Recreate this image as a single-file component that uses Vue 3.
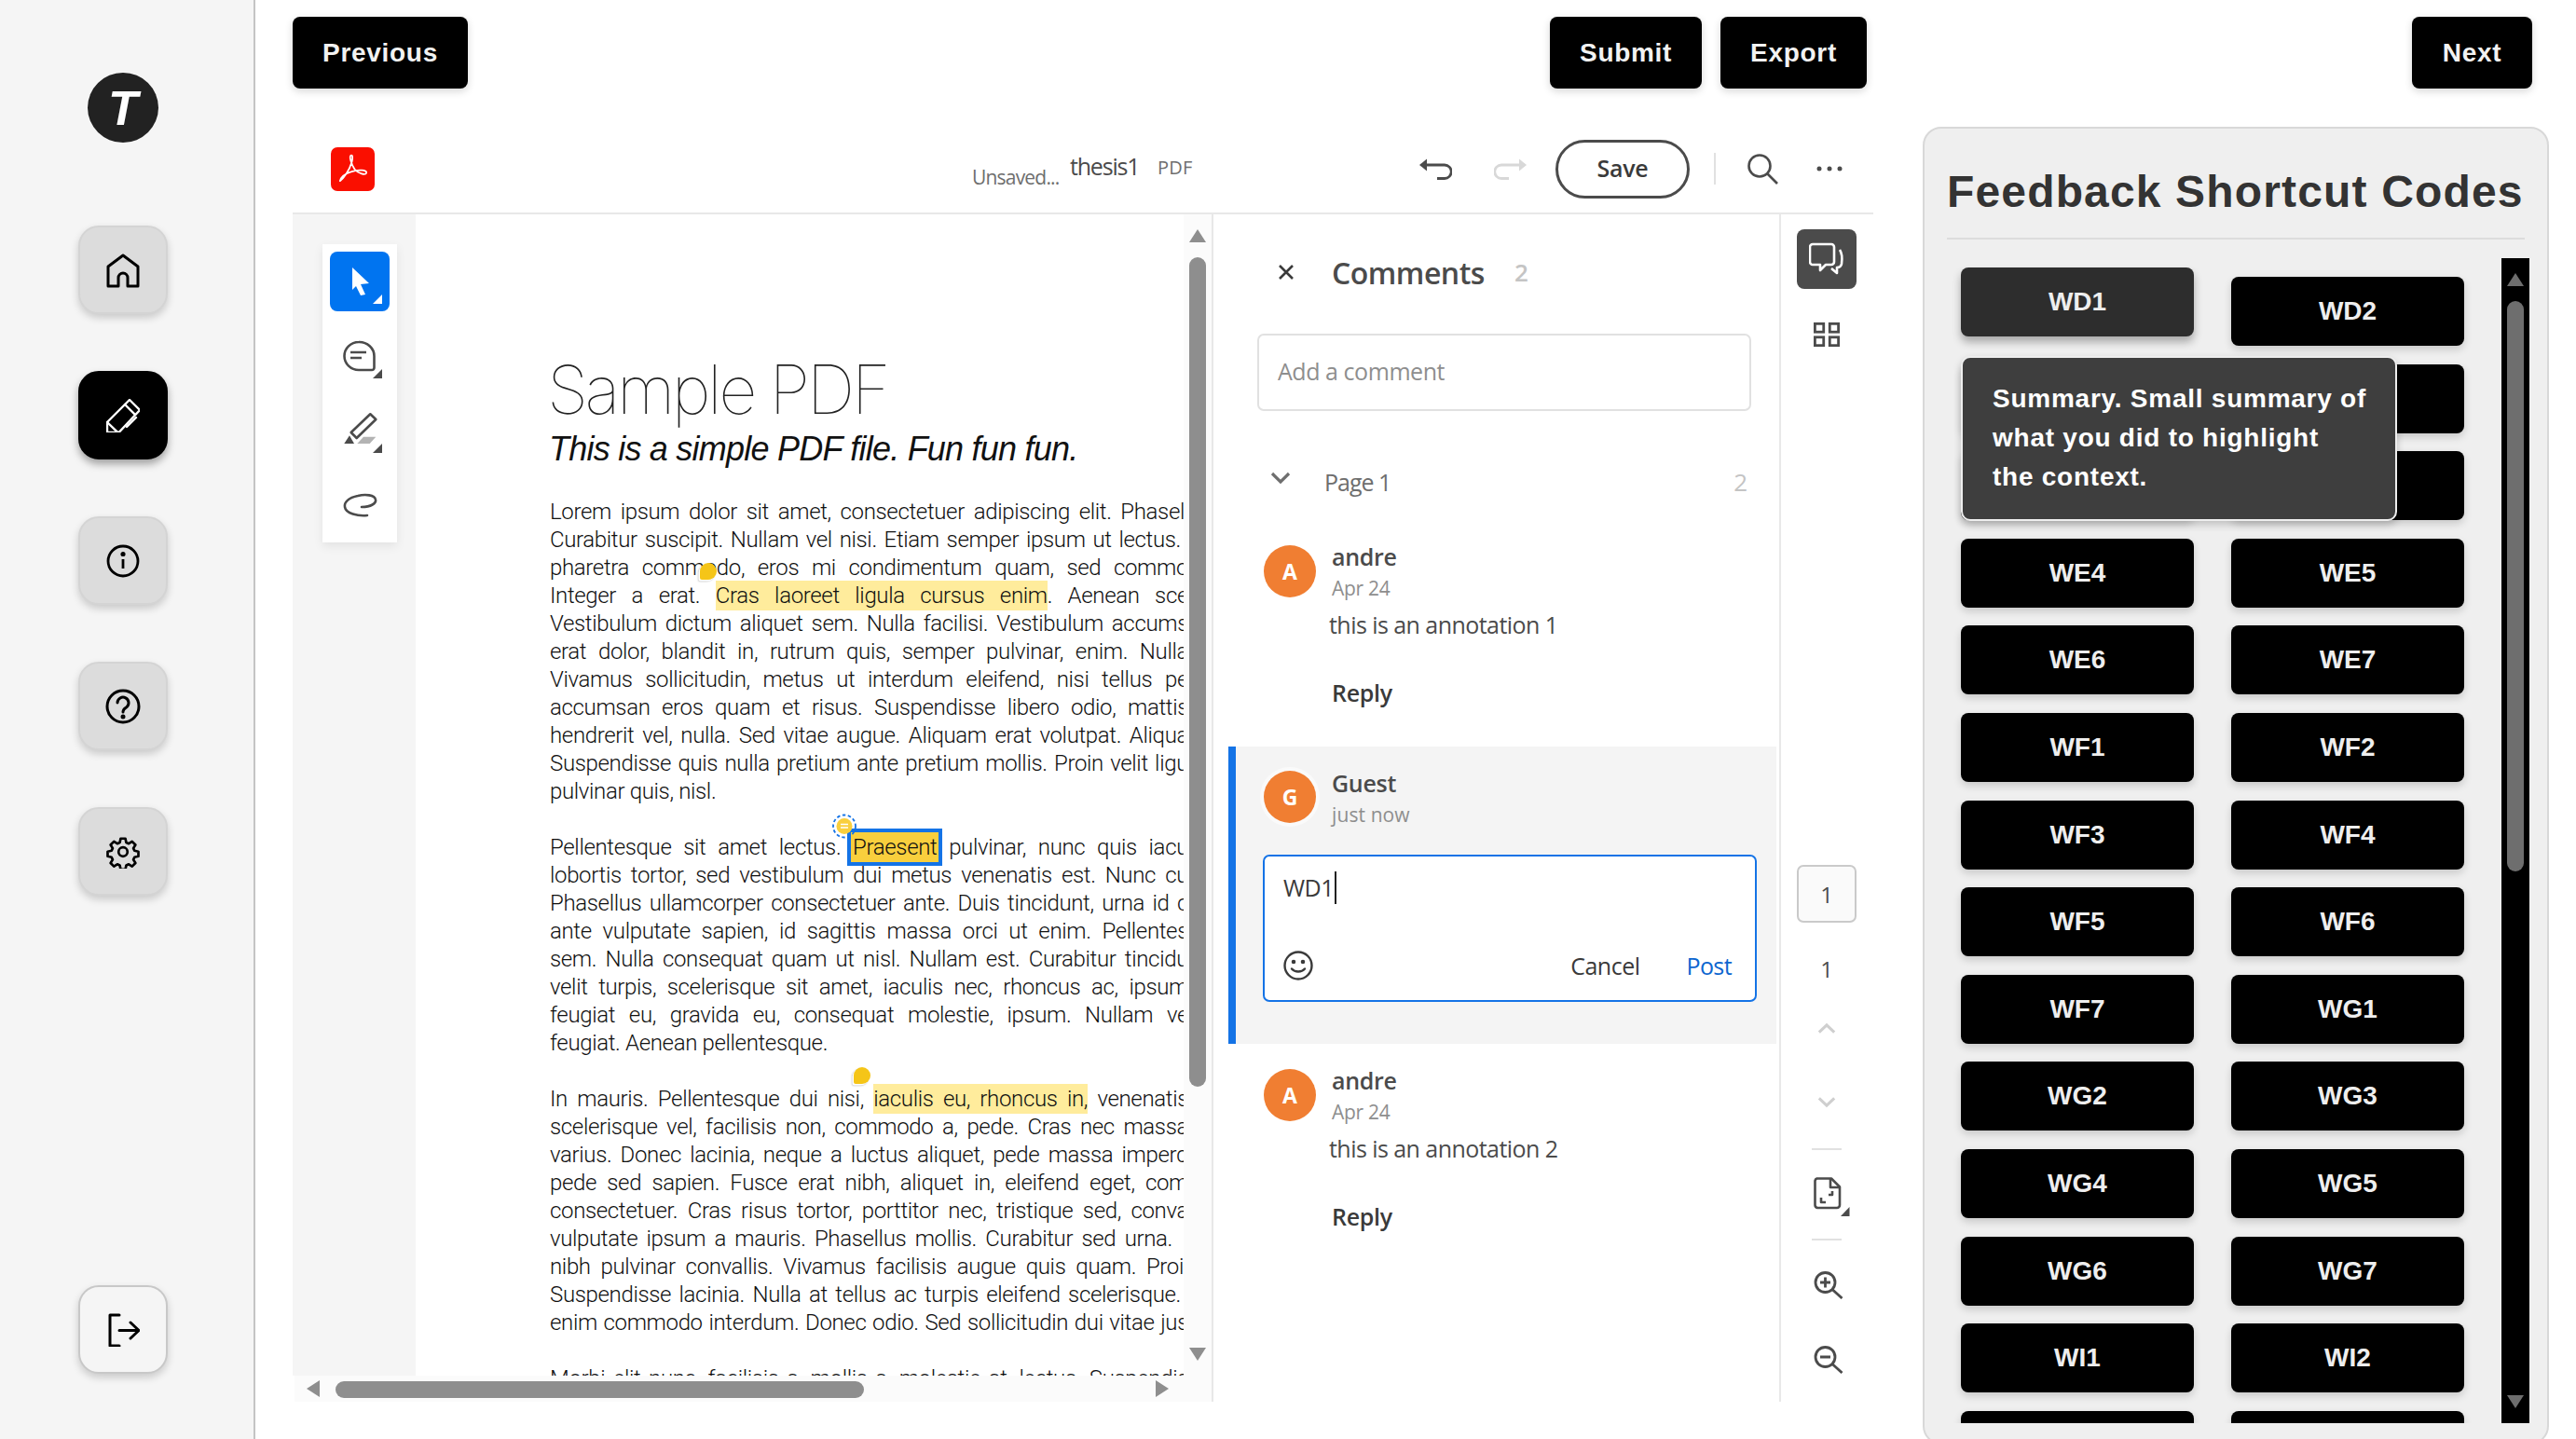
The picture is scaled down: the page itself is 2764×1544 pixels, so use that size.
<script setup>
const paragraphs = [
  [
    { w: 681, parts: [{ t: 'Lorem ipsum dolor sit amet, consectetuer adipiscing elit. Phasel' }] },
    { w: 677, parts: [{ t: 'Curabitur suscipit. Nullam vel nisi. Etiam semper ipsum ut lectus.' }] },
    { parts: [{ t: 'pharetra commodo, eros mi condimentum quam, sed commo' }] },
    { parts: [{ t: 'Integer a erat. ' }, { t: 'Cras laoreet ligula cursus enim', c: 'hl' }, { t: '. Aenean sce' }] },
    { parts: [{ t: 'Vestibulum dictum aliquet sem. Nulla facilisi. Vestibulum accums' }] },
    { parts: [{ t: 'erat dolor, blandit in, rutrum quis, semper pulvinar, enim. Nulla' }] },
    { parts: [{ t: 'Vivamus sollicitudin, metus ut interdum eleifend, nisi tellus pe' }] },
    { parts: [{ t: 'accumsan eros quam et risus. Suspendisse libero odio, mattis' }] },
    { parts: [{ t: 'hendrerit vel, nulla. Sed vitae augue. Aliquam erat volutpat. Aliqua' }] },
    { parts: [{ t: 'Suspendisse quis nulla pretium ante pretium mollis. Proin velit ligu' }] },
    { last: true, parts: [{ t: 'pulvinar quis, nisl.' }] },
  ],
  [
    { parts: [{ t: 'Pellentesque sit amet lectus. ' }, { t: 'Praesent', c: 'sel' }, { t: ' pulvinar, nunc quis iacu' }] },
    { parts: [{ t: 'lobortis tortor, sed vestibulum dui metus venenatis est. Nunc cu' }] },
    { parts: [{ t: 'Phasellus ullamcorper consectetuer ante. Duis tincidunt, urna id c' }] },
    { parts: [{ t: 'ante vulputate sapien, id sagittis massa orci ut enim. Pellentes' }] },
    { parts: [{ t: 'sem. Nulla consequat quam ut nisl. Nullam est. Curabitur tincidu' }] },
    { parts: [{ t: 'velit turpis, scelerisque sit amet, iaculis nec, rhoncus ac, ipsum' }] },
    { parts: [{ t: 'feugiat eu, gravida eu, consequat molestie, ipsum. Nullam ve' }] },
    { last: true, parts: [{ t: 'feugiat. Aenean pellentesque.' }] },
  ],
  [
    { parts: [{ t: 'In mauris. Pellentesque dui nisi, ' }, { t: 'iaculis eu, rhoncus in,', c: 'hl' }, { t: ' venenatis' }] },
    { parts: [{ t: 'scelerisque vel, facilisis non, commodo a, pede. Cras nec massa' }] },
    { parts: [{ t: 'varius. Donec lacinia, neque a luctus aliquet, pede massa imperd' }] },
    { parts: [{ t: 'pede sed sapien. Fusce erat nibh, aliquet in, eleifend eget, com' }] },
    { parts: [{ t: 'consectetuer. Cras risus tortor, porttitor nec, tristique sed, conva' }] },
    { w: 668, parts: [{ t: 'vulputate ipsum a mauris. Phasellus mollis. Curabitur sed urna.' }] },
    { w: 680, parts: [{ t: 'nibh pulvinar convallis. Vivamus facilisis augue quis quam. Proi' }] },
    { w: 677, parts: [{ t: 'Suspendisse lacinia. Nulla at tellus ac turpis eleifend scelerisque.' }] },
    { parts: [{ t: 'enim commodo interdum. Donec odio. Sed sollicitudin dui vitae jus' }] },
  ],
  [
    { parts: [{ t: 'Morbi elit nunc, facilisis a, mollis a, molestie at, lectus. Suspendis' }] },
  ],
]

const codes = [
  'WD1', 'WD2', 'WD3', 'WD4', 'WE2', 'WE3', 'WE4', 'WE5', 'WE6', 'WE7', 'WF1', 'WF2', 'WF3', 'WF4',
  'WF5', 'WF6', 'WF7', 'WG1', 'WG2', 'WG3', 'WG4', 'WG5', 'WG6', 'WG7', 'WI1', 'WI2', 'WI3', 'WI4',
]
</script>

<template>
  <div class="root">
    <aside class="sidebar">
      <div class="logo">T</div>
      <button class="nav">
        <svg width="36" height="38" viewBox="0 0 36 38" fill="none" stroke="#000" stroke-width="3" stroke-linejoin="round">
          <path d="M2 15 18 3l16 12v21H23V27a5 5 0 0 0-10 0v9H2z" />
        </svg>
      </button>
      <button class="nav active">
        <svg width="36" height="36" viewBox="0 0 36 36" fill="none" stroke="#fff" stroke-width="2.4" stroke-linejoin="round" stroke-linecap="round">
          <path d="M1 25 25 1l11 11-22.500 24H1z" />
          <path d="M20 6l10.700 10.700M1 25l11 10.700M22 30l10-10" />
        </svg>
      </button>
      <button class="nav">
        <svg width="36" height="36" viewBox="0 0 36 36" fill="none" stroke="#000" stroke-width="2.800">
          <circle cx="18" cy="18" r="16" />
          <path d="M18 16v10" />
          <circle cx="18" cy="10.500" r="1.200" fill="#000" />
        </svg>
      </button>
      <button class="nav">
        <svg width="38" height="38" viewBox="0 0 38 38" fill="none" stroke="#000" stroke-width="3" stroke-linecap="round">
          <circle cx="19" cy="19" r="17" />
          <path d="M13 15a6 6 0 1 1 9.500 5c-2.500 1.500-3.500 2.500-3.500 5" />
          <circle cx="19" cy="30" r="1" fill="#000" />
        </svg>
      </button>
      <button class="nav">
        <svg width="36" height="36" viewBox="0 0 24 24" fill="none" stroke="#000" stroke-width="1.800" stroke-linejoin="round">
          <circle cx="12" cy="12" r="3.200" />
          <path d="M10.300 2.500h3.400l.6 2.800 1.800.8 2.400-1.500 2.400 2.400-1.500 2.400.8 1.800 2.800.6v3.400l-2.800.6-.8 1.800 1.500 2.400-2.400 2.400-2.400-1.500-1.800.8-.6 2.800h-3.400l-.6-2.800-1.800-.8-2.400 1.500-2.400-2.400 1.500-2.400-.8-1.800-2.800-.6v-3.400l2.800-.6.800-1.800-1.500-2.400 2.400-2.400 2.400 1.500 1.800-.8z" />
        </svg>
      </button>
      <button class="nav logout">
        <svg width="36" height="36" viewBox="0 0 36 36" fill="none" stroke="#000" stroke-width="3" stroke-linecap="round" stroke-linejoin="round">
          <path d="M14 2H4v33h10" />
          <path d="M14 18.500h21M26 10l9 8.500-9 8.500" />
        </svg>
      </button>
    </aside>

    <main class="main">
      <div class="topbar">
        <button class="top-btn prev">Previous</button>
        <div class="actions">
          <button class="top-btn">Submit</button>
          <button class="top-btn">Export</button>
        </div>
        <button class="top-btn next">Next</button>
      </div>

      <div class="content">
        <section class="editor">
          <header class="ed-head">
            <div class="pdf-icon">
              <svg width="47" height="47" viewBox="0 0 48 48" fill="none" stroke="#fff" stroke-width="1.800" stroke-linejoin="round">
                <path d="M10 37c4-3 10-11 13-21 1-4 1-8-1-7-2 1 0 9 4 15 4 5 12 7 13 4s-9-4-17-1c-6 2-11 6-12 10z" />
              </svg>
            </div>
            <span class="unsaved">Unsaved...</span>
            <span class="fname">thesis1</span>
            <span class="ftype">PDF</span>
            <svg class="undo" width="35" height="23" viewBox="0 0 35 23" fill="none" stroke="#4b4b4b" stroke-width="2.800">
              <path d="M6 7h21a7 7 0 0 1 0 14.500h-8" />
              <path d="M0 7l8-6.500v13z" fill="#4b4b4b" stroke="none" />
            </svg>
            <svg class="redo" width="35" height="23" viewBox="0 0 35 23" fill="none" stroke="#d8d8d8" stroke-width="2.800">
              <path d="M29 7H8a7 7 0 0 0 0 14.500h8" />
              <path d="M35 7l-8-6.500v13z" fill="#d8d8d8" stroke="none" />
            </svg>
            <button class="save">Save</button>
            <span class="vsep"></span>
            <svg class="search" width="33" height="33" viewBox="0 0 33 33" fill="none" stroke="#4b4b4b" stroke-width="2.600">
              <circle cx="13" cy="13" r="11.500" />
              <path d="M21 21l11 11" />
            </svg>
            <svg class="dots" width="28" height="6" viewBox="0 0 28 6" fill="#4b4b4b">
              <circle cx="3" cy="3" r="2.500" />
              <circle cx="14" cy="3" r="2.500" />
              <circle cx="25" cy="3" r="2.500" />
            </svg>
          </header>

          <div class="ed-body">
            <div class="doc-wrap">
              <div class="doc-row">
                <div class="tools">
                  <div class="tool-panel">
                    <div class="tool on">
                      <svg width="64" height="64" viewBox="0 0 64 64" fill="#fff">
                        <path d="M24 17l18 17-9 1 5 11-5 1-5-10-4 4z" />
                        <path d="M56 46v10H46z" />
                      </svg>
                    </div>
                    <div class="tool">
                      <svg width="64" height="64" viewBox="0 0 64 64" fill="none" stroke="#4b4b4b" stroke-width="2.600">
                        <path d="M31 17a15.500 15 0 0 0 0 30h14a2.500 2.500 0 0 0 2.500-2.500V32A16 15 0 0 0 31 17z" />
                        <path d="M22 28h17M22 34h12" />
                        <path d="M56 46v10H46z" fill="#4b4b4b" stroke="none" />
                      </svg>
                    </div>
                    <div class="tool">
                      <svg width="64" height="64" viewBox="0 0 64 64" fill="none" stroke="#4b4b4b" stroke-width="2.600" stroke-linejoin="round">
                        <path d="M22.700 34 43.300 14.300l6 5.700-20.600 20z" />
                        <path d="M15.300 46 21 37.300 26 46z" fill="#4b4b4b" stroke="none" />
                        <path d="M29.300 46 36 38.700h13.300L42.700 46z" fill="#b3b3b3" stroke="none" />
                        <path d="M56 46v10H46z" fill="#4b4b4b" stroke="none" />
                      </svg>
                    </div>
                    <div class="tool">
                      <svg width="64" height="64" viewBox="0 0 64 64" fill="none" stroke="#4b4b4b" stroke-width="2.600" stroke-linecap="round">
                        <path d="M34 34c10 0 16-4 15-8-1-5-11-6-19-4-10 2-15 7-14 12 1 7 14 10 24 9" />
                      </svg>
                    </div>
                  </div>
                </div>

                <div class="page">
                  <h1 class="doc-title">Sample PDF</h1>
                  <h2 class="doc-sub">This is a simple PDF file. Fun fun fun.</h2>
                  <p v-for="(para, i) in paragraphs" :key="i" class="para">
                    <span
                      v-for="(line, j) in para"
                      :key="j"
                      class="ln"
                      :class="{ last: line.last }"
                      :style="line.w ? { width: line.w + 'px' } : null"
                    ><span v-for="(part, k) in line.parts" :key="k" :class="part.c">{{ part.t }}</span></span>
                  </p>
                  <span class="marker m1"></span>
                  <span class="marker-sel">
                    <svg width="26" height="27" viewBox="0 0 26 27">
                      <circle cx="13" cy="13.500" r="12" fill="none" stroke="#1473e6" stroke-width="1.800" stroke-dasharray="3.500 2.500" />
                      <circle cx="13" cy="13.500" r="8.500" fill="#f9cf3d" />
                      <path d="M9 11.500h8M9 15h8" stroke="#fff" stroke-width="1.600" />
                    </svg>
                  </span>
                  <span class="marker m3"></span>
                </div>

                <div class="vscroll">
                  <span class="arrow-up"></span>
                  <span class="vthumb"></span>
                  <span class="arrow-down"></span>
                </div>
              </div>

              <div class="hscroll">
                <span class="arrow-left"></span>
                <span class="hthumb"></span>
                <span class="arrow-right"></span>
              </div>
            </div>

            <div class="comments">
              <div class="c-head">
                <svg class="close" width="18" height="18" viewBox="0 0 18 18" stroke="#3a3a3a" stroke-width="2.600">
                  <path d="M2 2l14 14M16 2 2 16" />
                </svg>
                <span class="c-title">Comments</span>
                <span class="c-count">2</span>
              </div>
              <div class="add-box">Add a comment</div>
              <div class="page-row">
                <svg class="chev" width="22" height="14" viewBox="0 0 22 14" fill="none" stroke="#6e6e6e" stroke-width="3.200">
                  <path d="M2 2l9 9 9-9" />
                </svg>
                <span class="page-label">Page 1</span>
                <span class="page-count">2</span>
              </div>

              <div class="comment">
                <span class="avatar">A</span>
                <div class="c-text">
                  <div class="c-name">andre</div>
                  <div class="c-date">Apr 24</div>
                  <div class="c-msg">this is an annotation 1</div>
                  <div class="c-reply">Reply</div>
                </div>
              </div>

              <div class="active-block">
                <div class="active-top">
                  <span class="avatar ring">G</span>
                  <div>
                    <div class="c-name">Guest</div>
                    <div class="c-date now">just now</div>
                  </div>
                </div>
                <div class="input-box">
                  <div class="input-val">WD1<span class="caret"></span></div>
                  <div class="input-foot">
                    <svg width="32" height="32" viewBox="0 0 32 32" fill="none" stroke="#3a3a3a" stroke-width="2.400" stroke-linecap="round">
                      <circle cx="16" cy="16" r="14.500" />
                      <path d="M9 19.500c3.500 4 10.500 4 14 0" />
                      <circle cx="11" cy="12" r="1.100" fill="#3a3a3a" />
                      <circle cx="21" cy="12" r="1.100" fill="#3a3a3a" />
                    </svg>
                    <span class="cancel">Cancel</span>
                    <span class="post">Post</span>
                  </div>
                </div>
              </div>

              <div class="comment second">
                <span class="avatar">A</span>
                <div class="c-text">
                  <div class="c-name">andre</div>
                  <div class="c-date">Apr 24</div>
                  <div class="c-msg">this is an annotation 2</div>
                  <div class="c-reply">Reply</div>
                </div>
              </div>
            </div>

            <div class="rail">
              <div class="rail-on">
                <svg width="38" height="36" viewBox="0 0 38 36" fill="none" stroke="#fff" stroke-width="2.600" stroke-linejoin="round">
                  <path d="M4 2h20a3 3 0 0 1 3 3v16a3 3 0 0 1-3 3h-6l-6 6v-6H4a3 3 0 0 1-3-3V5a3 3 0 0 1 3-3z" />
                  <path d="M33 8c2 3 3 8 2 15-.500 3-2 4-5 4v6l-6-5" />
                </svg>
              </div>
              <svg class="grid-ico" width="28" height="28" viewBox="0 0 30 28" fill="none" stroke="#4b4b4b" stroke-width="3">
                <rect x="1.500" y="1.500" width="10" height="9.500" />
                <rect x="18.500" y="1.500" width="10" height="9.500" />
                <rect x="1.500" y="17" width="10" height="9.500" />
                <rect x="18.500" y="17" width="10" height="9.500" />
              </svg>
              <div class="page-input">1</div>
              <div class="page-total">1</div>
              <svg class="up" width="20" height="12" viewBox="0 0 22 12" fill="none" stroke="#cfcfcf" stroke-width="3.400">
                <path d="M2 11l9-8.500 9 8.500" />
              </svg>
              <svg class="down" width="20" height="12" viewBox="0 0 22 12" fill="none" stroke="#cfcfcf" stroke-width="3.400">
                <path d="M2 1l9 8.500L20 1" />
              </svg>
              <span class="rail-sep"></span>
              <svg class="fit" width="40" height="42" viewBox="0 0 40 42" fill="none" stroke="#4b4b4b" stroke-width="2.600" stroke-linejoin="round">
                <path d="M3.500 1.500H19l9 9V30a3 3 0 0 1-3 3H4a3 3 0 0 1-2.500-3V4a3 3 0 0 1 2-2.500z" />
                <path d="M18 2v9h9.500" />
                <path d="M8 22v5h5M20 15v4h-4" />
                <path d="M38.500 32v10H29z" fill="#4b4b4b" stroke="none" />
              </svg>
              <span class="rail-sep two"></span>
              <svg class="zin" width="32" height="30" viewBox="0 0 32 30" fill="none" stroke="#4b4b4b" stroke-width="2.800">
                <circle cx="12.500" cy="12" r="10.500" />
                <path d="M20 19.500l10.500 9.500M7 12h11M12.500 6.500v11" />
              </svg>
              <svg class="zout" width="32" height="30" viewBox="0 0 32 30" fill="none" stroke="#4b4b4b" stroke-width="2.800">
                <circle cx="12.500" cy="12" r="10.500" />
                <path d="M20 19.500l10.500 9.500M7 12h11" />
              </svg>
            </div>
          </div>
        </section>

        <section class="feedback">
          <h2 class="fb-title">Feedback Shortcut Codes</h2>
          <div class="fb-row">
            <div class="fb-list">
              <div class="fb-grid">
                <button v-for="(code, i) in codes" :key="code" class="code" :class="{ lifted: i === 0 }">{{ code }}</button>
              </div>
              <div class="tip">Summary. Small summary of<br />what you did to highlight<br />the context.</div>
            </div>
            <div class="fb-scroll">
              <span class="fb-up"></span>
              <span class="fb-thumb"></span>
              <span class="fb-down"></span>
            </div>
          </div>
        </section>
      </div>
    </main>
  </div>
</template>

<style>
html, body { margin: 0; background: #fff; overflow: hidden; }
</style>

<style scoped>
* { box-sizing: border-box; }
button { border: 0; padding: 0; font: inherit; }
.root {
  width: 2764px; height: 1544px; display: flex; overflow: hidden; background: #fff;
  font-family: "Liberation Sans", Arial, sans-serif;
}
.sidebar {
  width: 274px; flex: none; background: #f5f5f5; border-right: 2px solid #c4c4c4;
  display: flex; flex-direction: column; align-items: center; padding: 78px 8px 70px 0; gap: 61px;
}
.logo {
  width: 76px; height: 75px; border-radius: 50%; background: #222; color: #fff; margin-bottom: 28px;
  display: flex; align-items: center; justify-content: center;
  font: italic 700 52px "Liberation Sans", sans-serif;
}
.nav {
  width: 96px; height: 95px; border-radius: 22px; background: #dcdcdc; border: 2px solid #d4d4d4;
  box-shadow: 0 4px 8px rgba(0, 0, 0, .18); display: flex; align-items: center; justify-content: center;
}
.nav.active { background: #000; border-color: #000; box-shadow: 0 5px 9px rgba(0, 0, 0, .35); }
.nav.logout { margin-top: auto; background: #f5f5f5; border-color: #c8c8c8; }

.main { flex: 1; padding-left: 40px; min-width: 0; }
.topbar { display: flex; height: 96px; padding-top: 18px; width: 2403px; }
.top-btn {
  height: 77px; padding: 0 32px; background: #000; color: #f2f2f2; border-radius: 8px;
  font-size: 28px; font-weight: 700; letter-spacing: .7px;
  box-shadow: 0 3px 8px rgba(0, 0, 0, .16);
}
.prev { width: 188px; margin-right: auto; }
.actions { display: flex; gap: 20px; }
.actions .top-btn:first-child { width: 163px; }
.actions .top-btn:last-child { width: 157px; }
.next { width: 129px; margin-left: 585px; }

.content { display: flex; align-items: flex-start; }
.editor { width: 1696px; flex: none; }
.ed-head {
  height: 134px; padding: 38px 0 0 41px; display: flex; align-items: center; border-bottom: 2px solid #e8e8e8;
  font-family: "Open Sans", sans-serif; color: #6e6e6e;
}
.ed-head > * { flex: none; }
.pdf-icon { width: 47px; height: 47px; border-radius: 7px; background: #fa0f00; }
.unsaved { margin-left: 641px; width: 105px; font-size: 21px; margin-top: 17px; letter-spacing: -.8px; white-space: nowrap; color: #6e6e6e; }
.fname { width: 94px; font-size: 25px; margin-bottom: 6px; color: #4b4b4b; letter-spacing: -1.200px; }
.ftype { width: 40px; font-size: 20px; margin-bottom: 3px; letter-spacing: .2px; color: #6e6e6e; }
.undo { margin-left: 241px; }
.redo { margin-left: 45px; }
.save {
  margin-left: 31px; width: 144px; height: 63px; padding-bottom: 2px; border-radius: 32px; border: 3px solid #4b4b4b; background: #fff;
  color: #3a3a3a; font-family: "Open Sans", sans-serif; font-weight: 600; font-size: 25px; letter-spacing: -.3px;
}
.vsep { margin-left: 26px; width: 2px; height: 34px; background: #e1e1e1; }
.search { margin-left: 34px; }
.dots { margin-left: 41px; }

.ed-body { display: flex; height: 1274px; }
.doc-wrap { width: 986px; flex: none; }
.doc-row { display: flex; height: 1246px; }
.tools { width: 132px; flex: none; background: #f5f5f5; padding: 32px 0 0 32px; }
.tool-panel { width: 80px; height: 320px; background: #fff; padding: 8px 0 0 8px; box-shadow: 0 4px 10px rgba(0, 0, 0, .08); }
.tool { width: 64px; height: 64px; margin-bottom: 16px; border-radius: 8px; }
.tool svg { display: block; }
.tool.on { background: #0074f0; }

.page { position: relative; width: 824px; flex: none; padding: 0 0 0 144px; overflow: hidden; background: #fff; }
.doc-title {
  margin: 146px 0 0 -3px; font: 100 72px/84px Inter, "Liberation Sans", sans-serif; letter-spacing: -3.500px; color: #222; white-space: nowrap;
}
.doc-sub {
  margin: 0 0 0 -1px; font: italic 400 36px/44px "Liberation Sans", sans-serif; letter-spacing: -.77px; color: #111; white-space: nowrap; height: 74px;
}
.para { margin: 0 0 30px; font: 300 24px/30px Roboto, "Liberation Sans", sans-serif; color: #111; }
.ln { display: block; width: 685px; height: 30px; text-align: justify; text-align-last: justify; letter-spacing: -.35px; white-space: normal; }
.ln.last { text-align-last: left; }
.hl { background: #ffec9c; padding: 2px 0; }
.sel { background: #f9cf3d; padding: 2px 2px; margin: 0 -2px; outline: 4px solid #1473e6; outline-offset: 0; }
.marker { position: absolute; width: 18px; height: 18px; background: #f5c518; border-radius: 50% 50% 50% 2px; box-shadow: -1.500px 1.500px 0 #fff, -2px 2px 2px rgba(0,0,0,.25); }
.m1 { left: 305px; top: 374px; }
.m3 { left: 470px; top: 915px; }
.marker-sel { position: absolute; left: 447px; top: 643px; line-height: 0; }

.vscroll { position: relative; width: 30px; flex: none; background: #fbfbfb; }
.arrow-up, .arrow-down, .arrow-left, .arrow-right, .fb-up, .fb-down { position: absolute; width: 0; height: 0; }
.arrow-up { left: 6px; top: 16px; border: 9px solid transparent; border-top: 0; border-bottom: 14px solid #8e8e8e; }
.arrow-down { left: 6px; top: 1216px; border: 9px solid transparent; border-bottom: 0; border-top: 14px solid #8e8e8e; }
.vthumb { position: absolute; left: 6px; top: 46px; width: 18px; height: 890px; border-radius: 9px; background: #8e8e8e; }
.hscroll { position: relative; height: 28px; margin-left: 2px; background: #fbfbfb; }
.arrow-left { left: 13px; top: 5px; border: 9px solid transparent; border-left: 0; border-right: 14px solid #8e8e8e; }
.arrow-right { left: 924px; top: 5px; border: 9px solid transparent; border-right: 0; border-left: 14px solid #8e8e8e; }
.hthumb { position: absolute; left: 44px; top: 6px; width: 567px; height: 18px; border-radius: 9px; background: #8e8e8e; }

.comments {
  width: 611px; flex: none; border-left: 2px solid #e8e8e8; border-right: 2px solid #e8e8e8;
  font-family: "Open Sans", sans-serif; color: #4b4b4b;
}
.c-head { height: 128px; display: flex; align-items: center; padding: 0 0 4px 69px; }
.c-title { margin-left: 40px; width: 164px; font-size: 32px; font-weight: 600; letter-spacing: -.5px; white-space: nowrap; }
.c-count { margin-left: 32px; font-size: 26px; font-weight: 600; color: #c4c4c4; }
.add-box {
  margin-left: 47px; width: 530px; height: 83px; border: 2px solid #e1e1e1; border-radius: 7px; padding: 0 20px 4px;
  display: flex; align-items: center; font-size: 25px; letter-spacing: -.45px; color: #8e8e8e;
}
.page-row { margin: 50px 0 0 61px; height: 52px; width: 512px; display: flex; align-items: center; }
.chev { margin-top: -8px; flex: none; }
.page-label { margin-left: 36px; font-size: 25px; letter-spacing: -1px; color: #6e6e6e; }
.page-count { margin-left: auto; font-size: 26px; color: #c4c4c4; }
.comment { display: flex; margin: 37px 0 0 54px; }
.comment.second { margin-top: 22px; }
.avatar {
  width: 56px; height: 56px; margin: 5px 17px 0 0; flex: none; border-radius: 50%; background: #f07e32; color: #fff;
  display: flex; align-items: center; justify-content: center; font-size: 23px; font-weight: 700;
}
.avatar.ring { margin-top: 4px; box-shadow: 0 0 0 4px #fafafa; }
.c-name { font-size: 25px; line-height: 34px; font-weight: 600; letter-spacing: -.3px; color: #4b4b4b; }
.c-date { margin-top: 2px; font-size: 21px; line-height: 30px; letter-spacing: -.3px; color: #8e8e8e; }
.c-date.now { margin-top: 2px; letter-spacing: .1px; }
.c-msg { margin: 6px 0 0 -3px; font-size: 25px; line-height: 36px; letter-spacing: -.55px; color: #4b4b4b; white-space: nowrap; }
.c-reply { margin-top: 38px; font-size: 25px; line-height: 34px; font-weight: 600; letter-spacing: -.3px; color: #3a3a3a; }
.active-block { margin: 41px 0 0 16px; width: 588px; height: 319px; background: #f4f4f4; border-left: 8px solid #1473e6; padding: 22px 0 0 30px; }
.active-top { display: flex; }
.input-box { margin: 28px 0 0 -1px; width: 530px; height: 158px; background: #fff; border: 2px solid #1473e6; border-radius: 7px; padding: 0 25px 0 20px; }
.input-val { height: 99px; padding-top: 16px; font-size: 25px; line-height: 34px; letter-spacing: -.5px; color: #3a3a3a; display: flex; align-items: flex-start; }
.caret { display: block; width: 2px; height: 35px; background: #222; margin-left: 1px; }
.input-foot { display: flex; align-items: center; height: 36px; }
.cancel { margin-left: auto; font-size: 25px; letter-spacing: -.5px; color: #3a3a3a; }
.post { margin-left: 50px; font-size: 25px; letter-spacing: -.6px; color: #0d66d0; }

.rail { width: 99px; flex: none; display: flex; flex-direction: column; align-items: flex-start; padding: 16px 0 0 17px; font-family: "Open Sans", sans-serif; color: #4b4b4b; }
.rail-on { width: 64px; height: 64px; border-radius: 8px; background: #4b4b4b; display: flex; align-items: center; justify-content: center; }
.rail svg { flex: none; }
.grid-ico { margin: 35px 0 0 18px; }
.page-input { margin-top: 555px; width: 64px; height: 62px; border: 2px solid #cacaca; border-radius: 7px; background: #fafafa; display: flex; align-items: center; justify-content: center; font-size: 24px; }
.page-total { margin-top: 32px; width: 64px; text-align: center; font-size: 24px; line-height: 36px; }
.up { margin: 39px 0 0 22px; }
.down { margin: 68px 0 0 22px; }
.rail-sep { margin: 43px 0 0 16px; width: 32px; height: 2px; background: #e1e1e1; }
.fit { margin: 29px 0 0 18px; }
.rail-sep.two { margin-top: 24px; }
.zin { margin: 33px 0 0 18px; }
.zout { margin: 50px 0 0 18px; }

.feedback {
  width: 672px; height: 1414px; flex: none; margin: 40px 0 0 53px; background: #efefef; border: 2px solid #d8d8d8; border-radius: 20px; padding: 38px 0 0 24px;
}
.fb-title {
  margin: 0; width: 620px; padding-bottom: 19px; border-bottom: 2px solid #dcdcdc;
  font-size: 48px; line-height: 60px; font-weight: 700; letter-spacing: 1.150px; color: #333; white-space: nowrap;
}
.fb-row { display: flex; margin-top: 20px; height: 1250px; }
.fb-list { position: relative; width: 595px; height: 1250px; overflow: hidden; padding: 20px 0 0 15px; flex: none; }
.fb-grid { display: grid; grid-template-columns: 250px 250px; column-gap: 40px; grid-auto-rows: 74px; row-gap: 19.600px; }
.code { background: #000; color: #eee; border-radius: 8px; font-size: 28px; font-weight: 700; box-shadow: 0 4px 8px rgba(0, 0, 0, .16); }
.code.lifted { background: #2d2d2d; transform: translateY(-10px); box-shadow: 0 6px 10px rgba(0, 0, 0, .3); }
.tip {
  position: absolute; left: 15px; top: 105px; width: 468px; height: 177px; padding: 23px 0 0 32px;
  background: #3e3e3e; color: #fff; border: 2px solid #eee; border-radius: 10px; white-space: nowrap;
  font-size: 28px; line-height: 42px; font-weight: 700; letter-spacing: .75px; box-shadow: 0 4px 8px rgba(0, 0, 0, .2);
}
.fb-scroll { position: relative; width: 30px; height: 1250px; background: #000; flex: none; }
.fb-up { left: 6px; top: 16px; border: 9px solid transparent; border-top: 0; border-bottom: 14px solid #6e6e6e; }
.fb-down { left: 6px; top: 1220px; border: 9px solid transparent; border-bottom: 0; border-top: 14px solid #6e6e6e; }
.fb-thumb { position: absolute; left: 6px; top: 46px; width: 18px; height: 612px; border-radius: 9px; background: #6e6e6e; }
</style>
